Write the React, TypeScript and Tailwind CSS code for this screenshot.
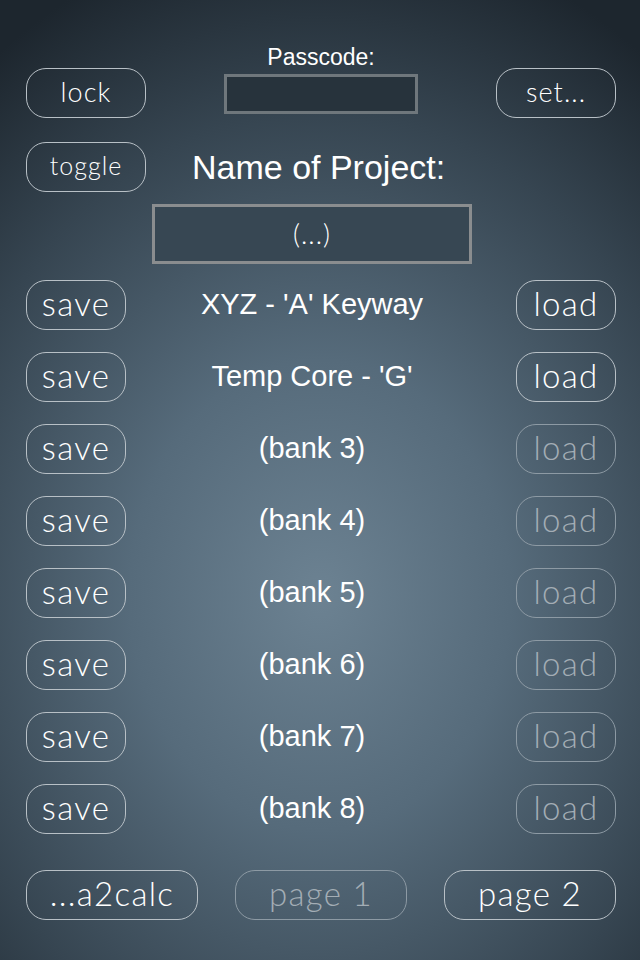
import React from "react";

const gothic = "font-['Lato','Liberation_Sans',sans-serif] font-light tracking-[0.04em]";
const helv = "font-['Liberation_Sans',Arial,sans-serif]";

function Btn({
  children,
  w,
  size,
  dim = false,
}: {
  children: React.ReactNode;
  w: string;
  size: string;
  dim?: boolean;
}) {
  return (
    <div
      className={`${w} h-[50px] shrink-0 rounded-[20px] border flex items-center justify-center pb-[2px] ${size} ${gothic} ${
        dim ? "border-[#8d9aa4] text-[#a3adb5]" : "border-[#b8c0c6] text-white"
      }`}
    >
      {children}
    </div>
  );
}

const banks = [
  { name: "XYZ - 'A' Keyway", loaded: true },
  { name: "Temp Core - 'G'", loaded: true },
  { name: "(bank 3)", loaded: false },
  { name: "(bank 4)", loaded: false },
  { name: "(bank 5)", loaded: false },
  { name: "(bank 6)", loaded: false },
  { name: "(bank 7)", loaded: false },
  { name: "(bank 8)", loaded: false },
];

export default function App() {
  return (
    <div className="w-[640px] h-[960px] overflow-hidden bg-[radial-gradient(ellipse_85%_70%_at_50%_62%,#6c8292_0%,#566b7b_35%,#364551_72%,#1d262e_100%)] pl-[26px] pr-[24px] pt-[45px]">
      {/* top row */}
      <div className="flex items-end justify-between">
        <Btn w="w-[120px]" size="text-[27px]">lock</Btn>
        <div className="flex flex-col items-center">
          <div className={`${helv} text-[23px] leading-[24px] text-white`}>Passcode:</div>
          <div className="mt-[5px] mb-[4px] w-[194px] h-[40px] border-[3px] border-[#6f777c] bg-[#27333c]" />
        </div>
        <Btn w="w-[120px]" size="text-[27px]">set...</Btn>
      </div>

      {/* toggle row */}
      <div className="mt-[24px] flex items-center">
        <Btn w="w-[120px]" size="text-[25px]">toggle</Btn>
        <div className={`${helv} ml-[46px] text-[34px] leading-[40px] text-white`}>Name of Project:</div>
      </div>

      {/* project input */}
      <div className="mt-[12px] flex">
        <div className={`ml-[126px] w-[320px] h-[60px] border-[3px] border-[#8a8d8f] bg-[#374753] flex items-center justify-center ${gothic} text-[27px] text-white`}>
          (...)
        </div>
      </div>

      {/* banks */}
      <div className="mt-[16px] flex flex-col gap-[22px]">
        {banks.map((b, i) => (
          <div key={i} className="flex items-center">
            <Btn w="w-[100px]" size="text-[33px]">save</Btn>
            <div className={`flex-1 mr-[18px] text-center ${helv} text-[29px] text-white`}>{b.name}</div>
            <Btn w="w-[100px]" size="text-[33px]" dim={!b.loaded}>load</Btn>
          </div>
        ))}
      </div>

      {/* bottom */}
      <div className="mt-[36px] flex items-center justify-between">
        <Btn w="w-[172px]" size="text-[33px]">...a2calc</Btn>
        <Btn w="w-[172px]" size="text-[33px]" dim>page 1</Btn>
        <Btn w="w-[172px]" size="text-[33px]">page 2</Btn>
      </div>
    </div>
  );
}
